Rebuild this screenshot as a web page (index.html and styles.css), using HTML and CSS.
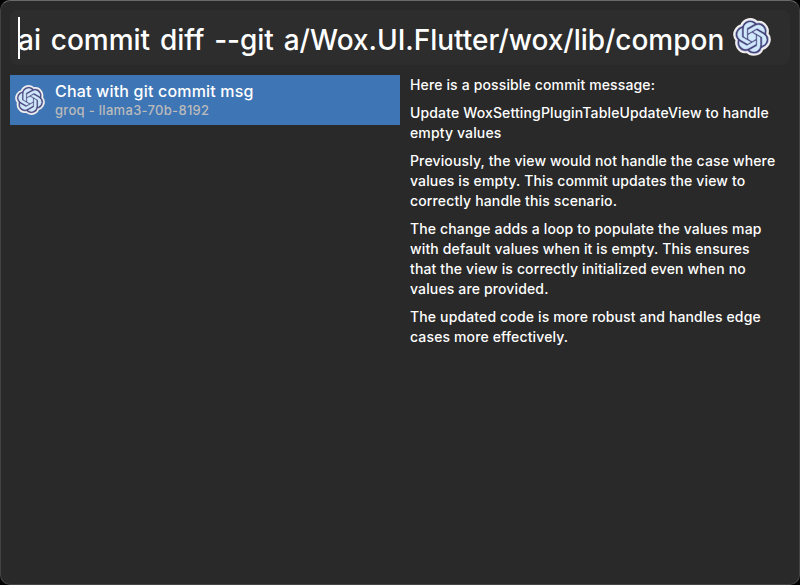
FILE: index.html
```html
<!DOCTYPE html>
<html lang="en">
<head>
<meta charset="utf-8">
<title>Wox</title>
<link rel="stylesheet" href="styles.css">
</head>
<body>
<svg class="defs" width="0" height="0" aria-hidden="true">
  <symbol id="knot" viewBox="-1.6 -1.6 27.2 27.2">
    <path class="rim" d="M22.2819 9.8211a5.9847 5.9847 0 0 0-.5157-4.9108 6.0462 6.0462 0 0 0-6.5098-2.9A6.0651 6.0651 0 0 0 4.9807 4.1818a5.9847 5.9847 0 0 0-3.9977 2.9 6.0462 6.0462 0 0 0 .7427 7.0966 5.98 5.98 0 0 0 .511 4.9107 6.051 6.051 0 0 0 6.5146 2.9001A5.9847 5.9847 0 0 0 13.2599 24a6.0557 6.0557 0 0 0 5.7718-4.2058 5.9894 5.9894 0 0 0 3.9977-2.9001 6.0557 6.0557 0 0 0-.7475-7.0729z"/>
    <path class="lines" d="M22.2819 9.8211a5.9847 5.9847 0 0 0-.5157-4.9108 6.0462 6.0462 0 0 0-6.5098-2.9A6.0651 6.0651 0 0 0 4.9807 4.1818a5.9847 5.9847 0 0 0-3.9977 2.9 6.0462 6.0462 0 0 0 .7427 7.0966 5.98 5.98 0 0 0 .511 4.9107 6.051 6.051 0 0 0 6.5146 2.9001A5.9847 5.9847 0 0 0 13.2599 24a6.0557 6.0557 0 0 0 5.7718-4.2058 5.9894 5.9894 0 0 0 3.9977-2.9001 6.0557 6.0557 0 0 0-.7475-7.0729zm-9.022 12.6081a4.4755 4.4755 0 0 1-2.8764-1.0408l.1419-.0804 4.7783-2.7582a.7948.7948 0 0 0 .3927-.6813v-6.7369l2.02 1.1686a.071.071 0 0 1 .038.052v5.5826a4.504 4.504 0 0 1-4.4945 4.4944zm-9.6607-4.1254a4.4708 4.4708 0 0 1-.5346-3.0137l.142.0852 4.783 2.7582a.7712.7712 0 0 0 .7806 0l5.8428-3.3685v2.3324a.0804.0804 0 0 1-.0332.0615L9.74 19.9502a4.4992 4.4992 0 0 1-6.1408-1.6464zM2.3408 7.8956a4.485 4.485 0 0 1 2.3655-1.9728V11.6a.7664.7664 0 0 0 .3879.6765l5.8144 3.3543-2.0201 1.1685a.0757.0757 0 0 1-.071 0l-4.8303-2.7865A4.504 4.504 0 0 1 2.3408 7.872zm16.5963 3.8558L13.1038 8.364 15.1192 7.2a.0757.0757 0 0 1 .071 0l4.8303 2.7913a4.4944 4.4944 0 0 1-.6765 8.1042v-5.6772a.79.79 0 0 0-.407-.667zm2.0107-3.0231l-.142-.0852-4.7735-2.7818a.7759.7759 0 0 0-.7854 0L9.409 9.2297V6.8974a.0662.0662 0 0 1 .0284-.0615l4.8303-2.7866a4.4992 4.4992 0 0 1 6.6802 4.66zM8.3065 12.863l-2.02-1.1638a.0804.0804 0 0 1-.038-.0567V6.0742a4.4992 4.4992 0 0 1 7.3757-3.4537l-.142.0805L8.704 5.459a.7948.7948 0 0 0-.3927.6813zm1.0976-2.3654l2.602-1.4998 2.6069 1.4998v2.9994l-2.5974 1.4997-2.6067-1.4997Z"/>
  </symbol>
</svg>
<main class="window">
  <header class="query">
    <div class="query-text"><span class="caret"></span>ai commit diff --git a/Wox.UI.Flutter/wox/lib/compon</div>
    <svg class="query-icon"><use href="#knot"/></svg>
  </header>
  <div class="content">
    <section class="results">
      <div class="result">
        <svg class="result-icon"><use href="#knot"/></svg>
        <div class="result-label">
          <div class="title">Chat with git commit msg</div>
          <div class="subtitle">groq - llama3-70b-8192</div>
        </div>
      </div>
    </section>
    <article class="preview">
      <p>Here is a possible commit message:</p>
      <p>Update WoxSettingPluginTableUpdateView to handle<br>empty values</p>
      <p>Previously, the view would not handle the case where<br>values is empty. This commit updates the view to<br>correctly handle this scenario.</p>
      <p>The change adds a loop to populate the values map<br>with default values when it is empty. This ensures<br>that the view is correctly initialized even when no<br>values are provided.</p>
      <p>The updated code is more robust and handles edge<br>cases more effectively.</p>
    </article>
  </div>
</main>
</body>
</html>
```
FILE: styles.css
```css
* { box-sizing: border-box; }
body { margin: 0; background: #000; font-family: Inter, "Liberation Sans", sans-serif; color: #fff; }
.defs { position: absolute; }
.window {
  width: 800px; height: 585px; padding: 9px 9px 0;
  background: #292929; border: 1px solid #434343; border-top-color: #696969;
  border-radius: 10px; overflow: hidden;
}
.query {
  display: flex; align-items: center; justify-content: space-between;
  height: 55px; padding: 0 19px 0 8px;
  background: #2d2d2d; border-radius: 8px;
}
.query-text {
  position: relative; width: 706px; height: 42px;
  font-size: 28px; line-height: 46px; font-weight: 450; letter-spacing: -0.02px; word-spacing: 2.4px; white-space: nowrap;
}
.caret { position: absolute; left: 0; top: 0; width: 2px; height: 42px; background: #fff; }
.query-icon { width: 38px; height: 38px; margin-bottom: 1px; }
.rim { fill: #cfe8fb; stroke: #f3eeee; stroke-width: 3; }
.lines { fill: #45417a; stroke: #cfe8fb; stroke-width: 0.4; }
.content { display: flex; padding-top: 10px; }
.results { flex: none; width: 390px; }
.result { display: flex; align-items: center; height: 50px; padding-left: 5px; background: #3e75b5; }
.result-icon { width: 30px; height: 30px; margin-right: 10px; }
.title { font-size: 16px; line-height: 20px; letter-spacing: 0.18px; font-weight: 450; white-space: nowrap; }
.subtitle { font-size: 13px; line-height: 18px; letter-spacing: 0.3px; font-weight: 500; color: #bbb; white-space: nowrap; }
.preview { padding-left: 10px; font-size: 14px; line-height: 20px; letter-spacing: 0.14px; font-weight: 500; white-space: nowrap; }
.preview p { margin: 0 0 8px; }
```
